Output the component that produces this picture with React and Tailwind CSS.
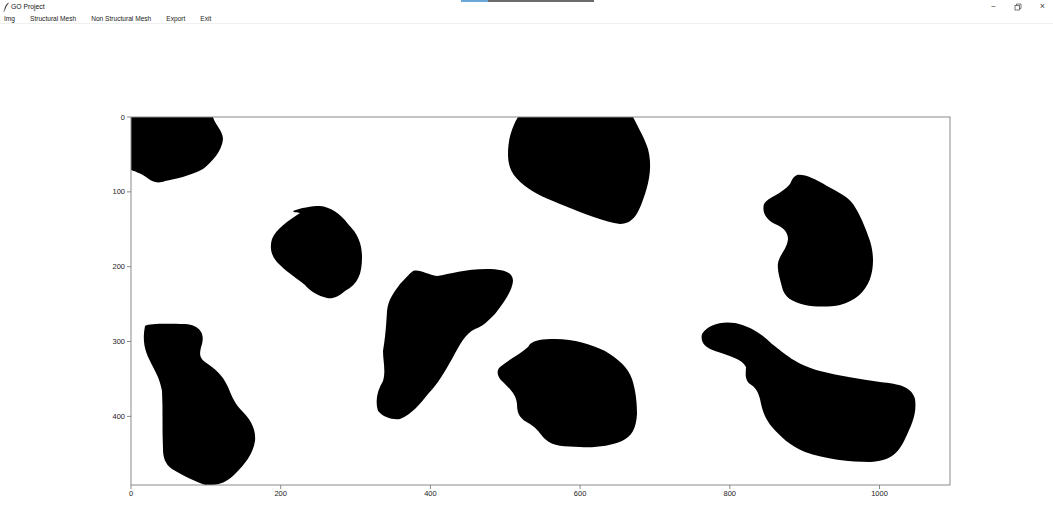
import React from "react";

const blobs = [
  // top-left
  "M131,118 L213,118 C214,124 223,132 223,140 C222,152 212,163 203,170 C190,177 175,180 165,182 C158,185 152,183 146,178 C140,174 134,172 131,171 Z",
  // small round
  "M293,212 C300,209 312,207 320,207 C330,208 340,214 348,225 C358,235 362,245 362,258 C362,275 358,285 345,292 C338,298 333,300 327,299 C318,297 310,292 305,286 C298,280 288,274 280,266 C272,259 269,250 272,240 C276,230 288,222 300,214 C297,213 294,214 293,212 Z",
  // big top center
  "M518,118 L633,118 C638,128 645,140 648,150 C652,165 650,180 645,195 C640,210 635,225 620,225 C605,223 585,215 565,207 C548,200 535,195 525,187 C512,177 508,168 508,155 C508,140 512,128 518,118 Z",
  // center tall
  "M413,272 C420,270 428,276 437,277 C450,275 465,270 487,270 C503,270 513,273 513,282 C512,292 505,302 495,315 C488,322 482,328 475,330 C465,335 460,345 452,360 C445,372 438,385 428,395 C420,405 412,415 400,420 C392,421 383,418 378,412 C375,402 377,392 383,382 C386,372 383,362 383,352 C385,340 386,330 387,312 C388,300 395,292 400,285 C405,280 409,275 413,272 Z",
  // lower center
  "M530,345 C535,341 542,340 555,340 C575,340 590,345 605,352 C618,360 628,368 632,380 C636,392 637,405 637,415 C636,430 632,437 622,442 C610,447 595,449 580,448 C565,447 553,448 545,440 C540,435 538,430 530,425 C520,420 517,415 517,405 C516,395 510,390 503,383 C497,378 496,372 500,368 C510,360 520,355 528,348 Z",
  // lower right long
  "M702,335 C708,326 720,322 735,324 C750,327 762,335 772,345 C785,355 795,365 820,372 C840,377 860,380 880,383 C900,385 912,388 915,400 C917,415 912,425 905,440 C898,455 890,462 870,463 C850,463 825,460 805,453 C790,447 780,437 772,428 C764,418 762,410 760,400 C758,392 755,388 750,385 C744,380 746,373 746,368 C742,360 730,357 715,352 C705,349 700,343 702,335 Z",
  // bottom left tall
  "M145,327 C150,324 170,325 185,325 C200,326 205,335 202,345 C200,352 198,358 205,363 C215,370 222,375 228,388 C232,398 235,405 243,413 C252,422 256,432 255,442 C253,455 245,465 235,475 C228,482 220,486 212,486 L205,486 C195,482 185,478 172,470 C165,465 163,458 163,450 C162,430 163,410 162,392 C160,380 155,372 150,362 C145,352 142,342 145,327 Z",
  // right kidney
  "M797,176 C805,175 815,180 827,187 C840,194 848,198 853,205 C860,215 866,230 870,242 C874,255 874,268 870,280 C865,293 855,302 840,306 C830,308 815,308 805,306 C792,303 784,298 782,288 C780,280 777,272 778,264 C780,255 787,250 788,240 C788,233 783,228 775,225 C765,220 762,212 764,205 C768,198 782,195 790,185 C792,180 794,177 797,176 Z",
];

const xTicks = [0, 200, 400, 600, 800, 1000];
const yTicks = [0, 100, 200, 300, 400];
const sx = (v) => 131 + v * 0.7485;
const sy = (v) => 118 + v * 0.7485;

const menu = ["Img", "Structural Mesh", "Non Structural Mesh", "Export", "Exit"];

const App = () => {
  return (
    <div className="w-[1053px] h-[532px] bg-white overflow-hidden flex flex-col" style={{ fontFamily: '"Liberation Sans", Arial, sans-serif' }}>
      {/* title bar */}
      <div className="h-[14px] flex items-center text-[6.8px] text-[#111]">
        <div className="w-[461px] flex items-center">
          <svg width="9" height="10" viewBox="0 0 9 10" className="ml-[2px]">
            <path d="M6.5 0.5 C4 2 2.5 5 2.2 8.5 L3 8.6 C3.4 6 4.6 3.5 6.8 0.9 Z" fill="#333" />
            <path d="M2.2 8.5 L1.8 9.8" stroke="#333" strokeWidth="0.7" />
          </svg>
          <span className="ml-[0px]">GO Project</span>
        </div>
        <div className="self-start flex h-[2px] w-[133px]">
          <div className="w-[27px] bg-[#6aa7d8]" />
          <div className="flex-1 bg-[#6b6b6b]" />
        </div>
        <div className="flex-1" />
        <div className="flex items-center text-[#444]">
          <span className="w-[25px] text-center text-[8px]">−</span>
          <svg width="8" height="8" viewBox="0 0 8 8" className="mx-[8px]">
            <rect x="1" y="2.5" width="4.5" height="4.5" fill="none" stroke="#555" strokeWidth="0.8" />
            <path d="M2.5 2.5 V1 H7 V5.5 H5.5" fill="none" stroke="#555" strokeWidth="0.8" />
          </svg>
          <span className="w-[25px] text-center text-[9px] mr-[-2px]">×</span>
        </div>
      </div>
      {/* menu */}
      <div className="h-[10px] flex items-center text-[6.6px] text-[#222] border-b border-[#f0f0f0] pl-[4px] gap-[15px]">
        {menu.map((m) => (
          <span key={m}>{m}</span>
        ))}
      </div>
      {/* plot */}
      <svg width="1053" height="507" viewBox="0 25 1053 507" className="block">
        {blobs.map((d, i) => (
          <path key={i} d={d} fill="#000" />
        ))}
        <rect x="131" y="118" width="819" height="368" fill="none" stroke="#8a8a8a" strokeWidth="1" />
        {xTicks.map((t) => (
          <g key={t}>
            <line x1={sx(t)} x2={sx(t)} y1="486" y2="490" stroke="#8a8a8a" strokeWidth="1" />
            <text x={sx(t)} y="497" fontSize="7.5" fill="#222" textAnchor="middle">
              {t}
            </text>
          </g>
        ))}
        {yTicks.map((t) => (
          <g key={t}>
            <line x1="127" x2="131" y1={sy(t)} y2={sy(t)} stroke="#8a8a8a" strokeWidth="1" />
            <text x="125" y={sy(t) + 2.6} fontSize="7.5" fill="#222" textAnchor="end">
              {t}
            </text>
          </g>
        ))}
      </svg>
    </div>
  );
};

export default App;
